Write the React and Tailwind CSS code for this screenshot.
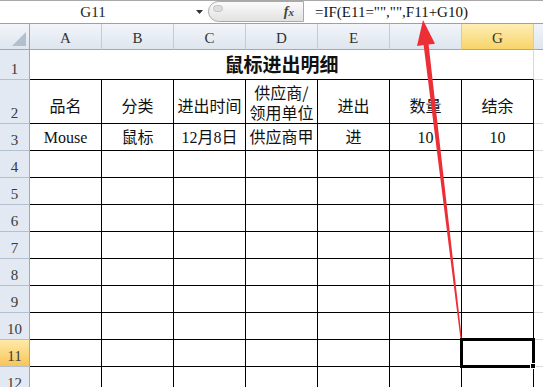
import React from 'react';

const COLS = ['A', 'B', 'C', 'D', 'E', 'F', 'G'];

const ROW2 = ['品名', '分类', '进出时间', 'D2', '进出', '数量', '结余'];
const ROW3 = ['Mouse', '鼠标', '12月8日', '供应商甲', '进', '10', '10'];

function RowHead({ n, h, hl }) {
  return (
    <div
      className={`w-[30px] shrink-0 flex items-end justify-center pb-[1px] border-r border-r-[#9aaabd] border-b border-b-[#b4c0cf] text-[15px] leading-[18px] text-[#3a3a3a] ${
        hl ? 'bg-linear-to-b from-[#ffe9a6] to-[#f6c657]' : 'bg-[#e2e9f2]'
      }`}
      style={{ height: h }}
    >
      {n}
    </div>
  );
}

function GridRow({ n, h, hl, children, tail = 'border-b border-b-[#d9d9d9]' }) {
  return (
    <div className="flex shrink-0" style={{ height: h }}>
      <RowHead n={n} h={h} hl={hl} />
      {children}
      <div className={`flex-1 ${tail}`} />
    </div>
  );
}

function Cell({ children, className = '' }) {
  return (
    <div className={`w-[72px] shrink-0 border-r border-b border-black flex justify-center text-[16px] leading-[20px] text-[#111] ${className}`}>
      {children}
    </div>
  );
}

export default function App() {
  const emptyRows = [4, 5, 6, 7, 8, 9, 10, 11, 12];
  return (
    <div className="relative w-[543px] h-[387px] overflow-hidden bg-white font-[family-name:Liberation_Serif,Noto_Sans_CJK_SC,serif]">
      {/* formula bar */}
      <div className="h-[24px] flex border-t border-t-[#a8a8a8] border-b border-b-[#a0a0a0] bg-white">
        <div className="w-[208px] shrink-0 flex items-center">
          <span className="w-[186px] text-center text-[15px] leading-[18px] text-[#222]">G11</span>
          <svg width="7" height="4" viewBox="0 0 7 4" className="ml-[10px]">
            <polygon points="0,0 7,0 3.5,4" fill="#333" />
          </svg>
        </div>
        <div className="w-[96px] h-[21px] shrink-0 rounded-l-full border border-[#a9a9a9] bg-linear-to-b from-[#fbfbfb] to-[#e2e2e2] flex items-start">
          <div className="ml-[4px] mt-[3px] w-[10px] h-[7px] rounded-full border border-[#c2c2c2] bg-[#dedede]" />
          <span className="ml-auto mr-[9px] mt-[1px] italic font-bold text-[14px] leading-[18px] text-[#444]">
            f<span className="text-[11px]">x</span>
          </span>
        </div>
        <div className="flex-1 flex items-center pl-[11px] text-[15px] leading-[18px] text-[#111]">
          =IF(E11="","",F11+G10)
        </div>
      </div>

      {/* column headers */}
      <div className="h-[26px] flex bg-linear-to-b from-[#f2f5fa] to-[#dee5ee]">
        <div className="w-[30px] shrink-0 border-r border-r-[#9aaabd] border-b border-b-[#9aaabd] relative">
          <svg width="30" height="26" viewBox="0 0 30 26" className="absolute left-0 top-0">
            <polygon points="26,8 26,22 12,22" fill="#b3bfcc" />
          </svg>
        </div>
        {COLS.map((c) => (
          <div
            key={c}
            className={`w-[72px] shrink-0 flex items-end justify-center pb-[2px] border-r border-r-[#c3cdd9] border-b border-b-[#9aaabd] text-[15px] leading-[18px] text-[#333] ${
              c === 'G' ? 'bg-linear-to-b from-[#fdeeb4] to-[#f8d468]' : ''
            }`}
          >
            {c}
          </div>
        ))}
        <div className="flex-1 border-b border-b-[#9aaabd]" />
      </div>

      {/* row 1 - merged title */}
      <GridRow n="1" h={30}>
        <div className="w-[504px] shrink-0 border-b border-black border-r border-r-[#d9d9d9] flex items-center justify-center pb-[1px]">
          <span className="font-[family-name:Noto_Sans_CJK_SC,sans-serif] font-bold text-[19px] leading-[24px] text-[#111]">
            鼠标进出明细
          </span>
        </div>
      </GridRow>

      {/* row 2 - headers */}
      <GridRow n="2" h={44}>
        {ROW2.map((t, i) =>
          t === 'D2' ? (
            <Cell key={i} className="flex-col items-center justify-center pt-[1px] text-center font-[family-name:Noto_Sans_CJK_SC,sans-serif]">
              <div className="leading-[20px]">供应商/</div>
              <div className="leading-[20px]">领用单位</div>
            </Cell>
          ) : (
            <Cell key={i} className="items-center pt-[6px] text-center font-[family-name:Noto_Sans_CJK_SC,sans-serif]">
              {t}
            </Cell>
          )
        )}
      </GridRow>

      {/* row 3 - data */}
      <GridRow n="3" h={27}>
        {ROW3.map((t, i) => (
          <Cell key={i} className="items-end pb-[2px]">
            {t}
          </Cell>
        ))}
      </GridRow>

      {emptyRows.map((n) => (
        <GridRow key={n} n={String(n)} h={27} hl={n === 11}>
          {COLS.map((c) => (
            <Cell key={c} />
          ))}
        </GridRow>
      ))}

      {/* selected cell G11 */}
      <div className="absolute left-[460px] top-[338px] w-[75px] h-[30px] border-[3px] border-double border-black" />
      <div className="absolute left-[530px] top-[363px] w-[6px] h-[6px] bg-black border border-white" />

      {/* red arrow */}
      <svg width="543" height="387" viewBox="0 0 543 387" className="absolute left-0 top-0 pointer-events-none">
        <polygon
          points="423,20 435,43.7 428.6,44.5 461.8,338 460.4,338.2 423.6,45.1 417,46"
          fill="#ec2f37"
        />
      </svg>
    </div>
  );
}
